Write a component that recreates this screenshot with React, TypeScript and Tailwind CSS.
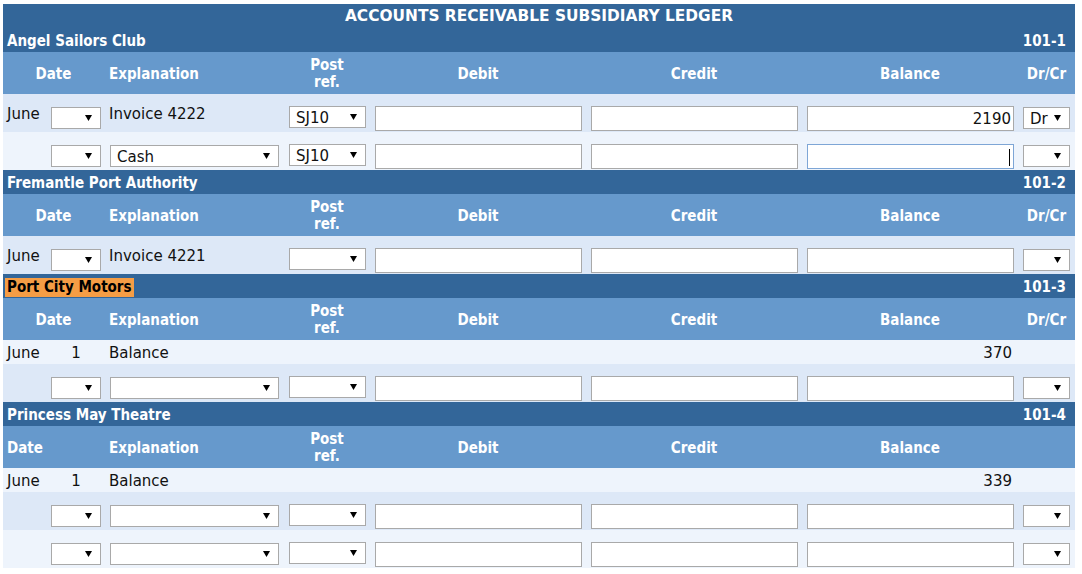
import React from "react";

const BODY = "font-['DejaVu_Sans',sans-serif] text-[15px] text-[#111]";
const HEAD = "font-['DejaVu_Sans_Condensed','DejaVu_Sans',sans-serif] font-stretch-condensed font-bold text-[15px] text-white";

function Arrow() {
  return (
    <svg width="7" height="6" viewBox="0 0 7 6" className="shrink-0">
      <path d="M0 0H7L3.5 6Z" fill="#000" />
    </svg>
  );
}

function Sel({ w, v }: { w: string; v?: string }) {
  return (
    <div className={`${w} h-[22px] bg-white border border-[#a9a9a9] flex items-center justify-between pl-[6px] pr-[8px] ${BODY} leading-none`}>
      <span className="pt-[3px]">{v ?? ""}</span>
      <Arrow />
    </div>
  );
}

function Inp({ v, focus }: { v?: string; focus?: boolean }) {
  return (
    <div
      className={`w-[207px] h-[25px] bg-white border ${focus ? "border-[#7ea6d6]" : "border-[#a9a9a9]"} flex items-center justify-end pr-[2px] pt-[2px] ${BODY}`}
    >
      {v}
      {focus && <span className="w-px h-[17px] bg-black mr-[1px]" />}
    </div>
  );
}

function Bar({ name, code, hl }: { name: string; code: string; hl?: boolean }) {
  return (
    <div className={`h-[24px] bg-[#336699] flex items-center justify-between pl-[2px] pr-[9px] pt-[2px] ${HEAD}`}>
      {hl ? (
        <span className="bg-[#f59d45] text-black px-[2px] leading-[19px]">{name}</span>
      ) : (
        <span className="pl-[2px]">{name}</span>
      )}
      <span>{code}</span>
    </div>
  );
}

function Header({ leftDate, noDc }: { leftDate?: boolean; noDc?: boolean }) {
  return (
    <div className={`h-[42px] bg-[#6699cc] flex items-center pt-[2px] ${HEAD}`}>
      {leftDate ? (
        <div className="w-[101px] pl-[4px]">Date</div>
      ) : (
        <div className="w-[101px] text-center">Date</div>
      )}
      <div className="w-[180px] pl-[5px]">Explanation</div>
      <div className="w-[86px] text-center leading-[17px]">
        Post
        <br />
        ref.
      </div>
      <div className="w-[216px] text-center">Debit</div>
      <div className="w-[216px] text-center">Credit</div>
      <div className="w-[216px] text-center">Balance</div>
      <div className="w-[57px] text-center">{noDc ? "" : "Dr/Cr"}</div>
    </div>
  );
}

type RowProps = {
  bg: string;
  june?: boolean;
  ex?: string;
  exSel?: string | null;
  post?: string;
  bal?: string;
  focus?: boolean;
  dc?: string;
};

function InRow({ bg, june, ex, exSel, post, bal, focus, dc }: RowProps) {
  return (
    <div className={`h-[38px] ${bg} flex items-start ${BODY}`}>
      <div className="w-[45px] pl-[4px] pt-[11px] leading-[18px]">{june ? "June" : ""}</div>
      <div className="w-[56px] pl-[3px] pt-[13px]">
        <Sel w="w-[50px]" />
      </div>
      {exSel !== undefined ? (
        <div className="w-[180px] pl-[6px] pt-[13px]">
          <Sel w="w-[169px]" v={exSel ?? ""} />
        </div>
      ) : (
        <div className="w-[180px] pl-[5px] pt-[11px] leading-[18px]">{ex}</div>
      )}
      <div className="w-[86px] pl-[5px] pt-[12px]">
        <Sel w="w-[77px]" v={post} />
      </div>
      <div className="w-[216px] pl-[5px] pt-[12px]">
        <Inp />
      </div>
      <div className="w-[216px] pl-[5px] pt-[12px]">
        <Inp />
      </div>
      <div className="w-[216px] pl-[5px] pt-[12px]">
        <Inp v={bal} focus={focus} />
      </div>
      <div className="w-[57px] pl-[5px] pt-[13px]">
        <Sel w="w-[47px]" v={dc} />
      </div>
    </div>
  );
}

function TextRow({ bg, bal }: { bg: string; bal: string }) {
  return (
    <div className={`h-[24px] ${bg} flex items-center pt-[2px] ${BODY}`}>
      <div className="w-[45px] pl-[4px]">June</div>
      <div className="w-[56px] text-center">1</div>
      <div className="w-[180px] pl-[5px]">Balance</div>
      <div className="w-[86px]" />
      <div className="w-[216px]" />
      <div className="w-[216px]" />
      <div className="w-[216px] text-right pr-[6px]">{bal}</div>
      <div className="w-[57px]" />
    </div>
  );
}

const D = "bg-[#dde8f7]";
const L = "bg-[#eef4fc]";

export default function App() {
  return (
    <div className="w-[1082px] h-[574px] bg-white pl-[3px] pt-[4px] overflow-hidden">
      <div className="w-[1072px] flex flex-col">
        <div className="h-[24px] bg-[#336699] flex items-center justify-center pt-[1px] font-['DejaVu_Sans',sans-serif] font-bold text-[15.4px] text-white">
          ACCOUNTS RECEIVABLE SUBSIDIARY LEDGER
        </div>
        <Bar name="Angel Sailors Club" code="101-1" />
        <Header />
        <InRow bg={D} june ex="Invoice 4222" post="SJ10" bal="2190" dc="Dr" />
        <InRow bg={L} exSel="Cash" post="SJ10" focus />

        <Bar name="Fremantle Port Authority" code="101-2" />
        <Header />
        <InRow bg={D} june ex="Invoice 4221" />

        <Bar name="Port City Motors" code="101-3" hl />
        <Header />
        <TextRow bg={L} bal="370" />
        <InRow bg={D} exSel={null} />

        <Bar name="Princess May Theatre" code="101-4" />
        <Header leftDate noDc />
        <TextRow bg={L} bal="339" />
        <InRow bg={D} exSel={null} />
        <InRow bg={L} exSel={null} />
      </div>
    </div>
  );
}
